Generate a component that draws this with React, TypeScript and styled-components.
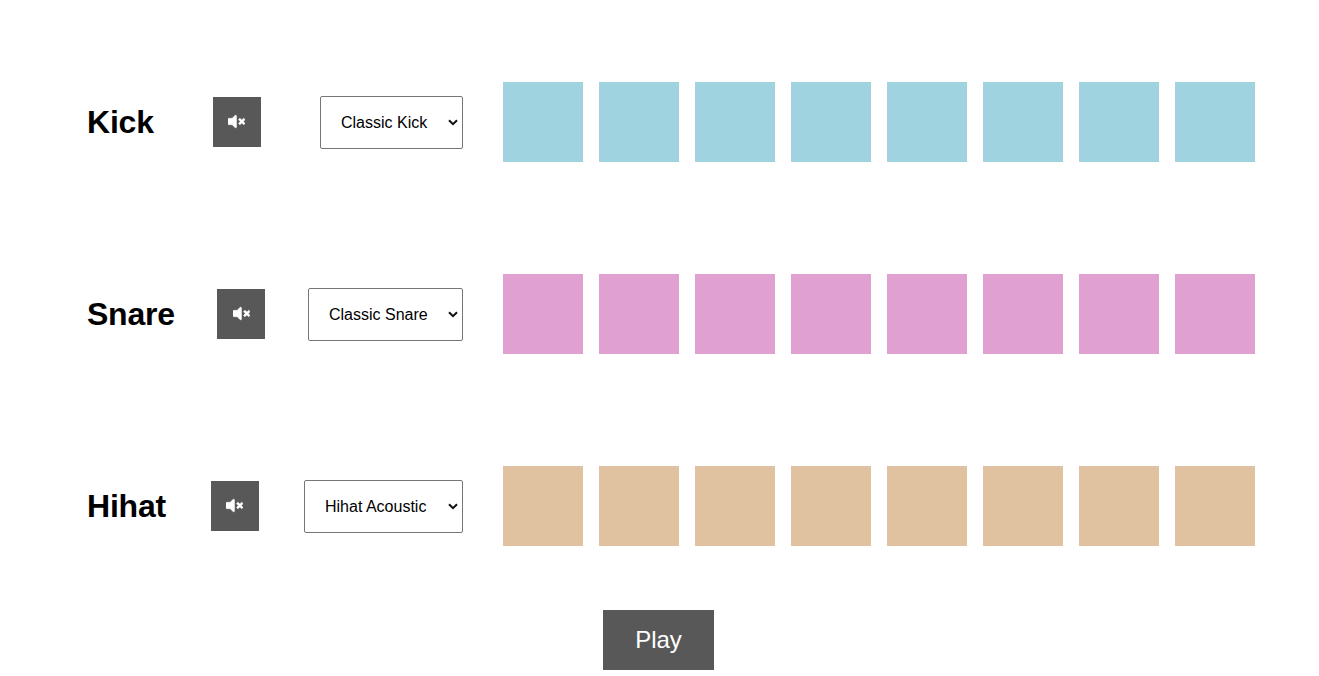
import React from 'react';
import styled, { createGlobalStyle } from 'styled-components';

const GlobalStyle = createGlobalStyle`
  * { margin: 0; padding: 0; box-sizing: border-box; }
  body { font-family: "Liberation Sans", Arial, sans-serif; background: #fff; color: #000; overflow: hidden; }
`;

const Sequencer = styled.main`
  display: flex;
  flex-direction: column;
  align-items: center;
  padding: 26px 2px 0 0;
`;

const Track = styled.section`
  display: flex;
  align-items: center;
  width: 1189px;
  height: 192px;
  padding-left: 23px;
`;

const Controls = styled.div`
  display: flex;
  flex: none;
  align-items: center;
  justify-content: space-between;
  width: 376px;
`;

const Title = styled.h1`
  font-size: 32px;
  line-height: 37px;
  font-weight: bold;
  letter-spacing: -0.22px;
`;

const MuteButton = styled.button`
  display: flex;
  align-items: center;
  justify-content: center;
  width: 48px;
  height: 50px;
  padding-bottom: 2px;
  border: none;
  background: #585858;
  color: #fff;
`;

const SelectWrap = styled.div`
  position: relative;
`;

const SoundSelect = styled.select`
  display: block;
  appearance: none;
  height: 53px;
  padding: 0 34px 0 20px;
  border: 1px solid #767676;
  border-radius: 2px;
  font-family: inherit;
  font-size: 16px;
  background: #fff;
  color: #000;
`;

const Arrow = styled.svg`
  position: absolute;
  right: 5px;
  top: 23px;
  width: 10px;
  height: 7px;
  pointer-events: none;
`;

const Steps = styled.div`
  display: flex;
  flex: none;
  gap: 16px;
  margin-left: 40px;
`;

const Pad = styled.div<{ $color: string }>`
  width: 80px;
  height: 80px;
  background: ${(p) => p.$color};
`;

const PlayButton = styled.button`
  width: 111px;
  height: 60px;
  margin-top: 8px;
  border: none;
  background: #585858;
  color: #fff;
  font-family: inherit;
  font-size: 24px;
`;

const tracks = [
  { name: 'Kick', sound: 'Classic Kick', color: '#9fd3e0' },
  { name: 'Snare', sound: 'Classic Snare', color: '#e0a0d1' },
  { name: 'Hihat', sound: 'Hihat Acoustic', color: '#e0c2a0' },
];

const MuteIcon = () => (
  <svg width="17" height="17" viewBox="0 0 512 512" fill="currentColor" stroke="currentColor" strokeWidth="14">
    <path d="M215.03 71.05L126.06 160H24c-13.26 0-24 10.74-24 24v144c0 13.25 10.74 24 24 24h102.06l88.97 88.95c15.03 15.03 40.97 4.47 40.97-16.97V88.02c0-21.46-25.96-31.98-40.97-16.97zM461.64 256l45.64-45.64c6.3-6.3 6.3-16.52 0-22.82l-22.82-22.82c-6.3-6.3-16.52-6.3-22.82 0L416 210.36l-45.64-45.64c-6.3-6.3-16.52-6.3-22.82 0l-22.82 22.82c-6.3 6.3-6.3 16.52 0 22.82L370.36 256l-45.63 45.63c-6.3 6.3-6.3 16.52 0 22.82l22.82 22.82c6.3 6.3 16.52 6.3 22.82 0L416 301.64l45.64 45.64c6.3 6.3 16.52 6.3 22.82 0l22.82-22.82c6.3-6.3 6.3-16.52 0-22.82L461.64 256z" />
  </svg>
);

export default function App() {
  return (
    <>
      <GlobalStyle />
      <Sequencer>
        {tracks.map((t) => (
          <Track key={t.name}>
            <Controls>
              <Title>{t.name}</Title>
              <MuteButton aria-label={`Mute ${t.name}`}><MuteIcon /></MuteButton>
              <SelectWrap>
                <SoundSelect defaultValue={t.sound}>
                  <option>{t.sound}</option>
                </SoundSelect>
                <Arrow viewBox="0 0 10 7" fill="none" stroke="#101010" strokeWidth="2">
                  <path d="M1 1.2 5 5.2 9 1.2" />
                </Arrow>
              </SelectWrap>
            </Controls>
            <Steps>
              {Array.from({ length: 8 }, (_, i) => <Pad key={i} $color={t.color} />)}
            </Steps>
          </Track>
        ))}
        <PlayButton>Play</PlayButton>
      </Sequencer>
    </>
  );
}
